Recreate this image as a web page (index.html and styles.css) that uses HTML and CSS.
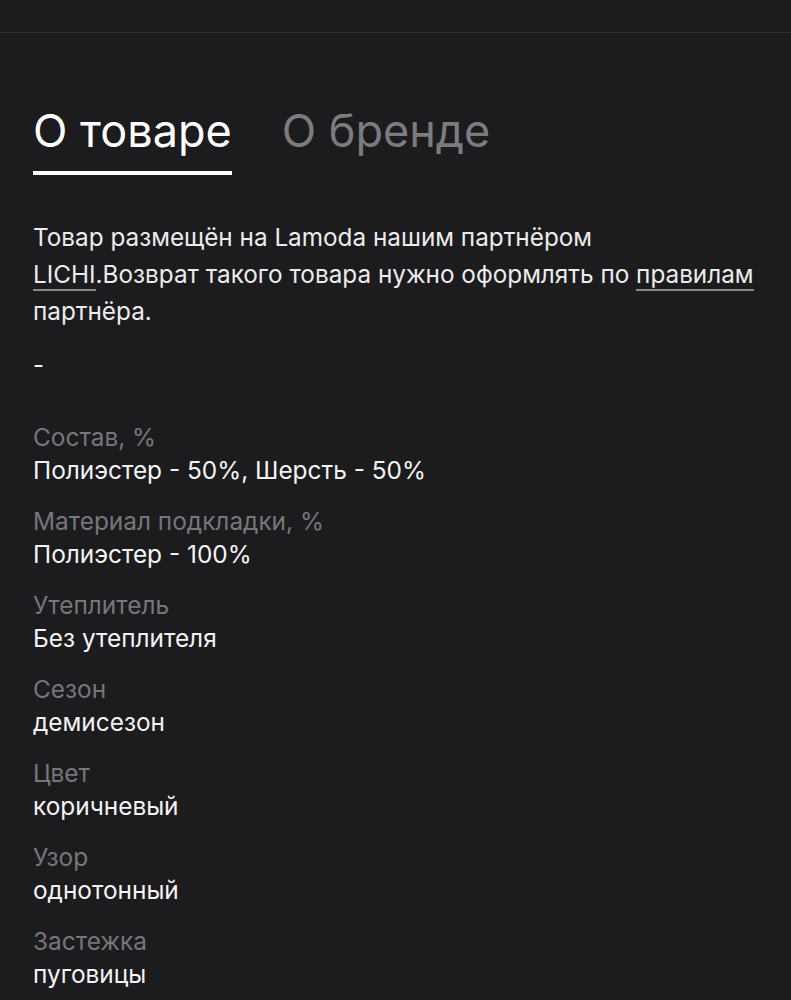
FILE: index.html
```html
<!DOCTYPE html>
<html lang="ru">
<head>
    <meta charset="UTF-8">
    <meta name="viewport" content="width=device-width, initial-scale=1.0">
    <title>О товаре</title>
    <link rel="stylesheet" href="styles.css">
</head>
<body>
    <div class="topbar"></div>

    <div class="content">
        <!-- Tabs -->
        <div class="tabs">
            <div class="tab active">О товаре</div>
            <div class="tab">О бренде</div>
        </div>

        <p class="partner">
            <span class="line">Товар размещён на Lamoda нашим партнёром</span>
            <span class="line"><a href="#" class="link">LICHI</a>.Возврат такого товара нужно оформлять по <a href="#" class="link">правилам</a></span>
            <span class="line">партнёра.</span>
        </p>

        <p class="dash">-</p>

        <div class="specs">
            <div class="spec">
                <div class="spec-label">Состав, %</div>
                <div class="spec-value">Полиэстер - 50%, Шерсть - 50%</div>
            </div>
            <div class="spec">
                <div class="spec-label">Материал подкладки, %</div>
                <div class="spec-value">Полиэстер - 100%</div>
            </div>
            <div class="spec">
                <div class="spec-label">Утеплитель</div>
                <div class="spec-value">Без утеплителя</div>
            </div>
            <div class="spec">
                <div class="spec-label">Сезон</div>
                <div class="spec-value">демисезон</div>
            </div>
            <div class="spec">
                <div class="spec-label">Цвет</div>
                <div class="spec-value">коричневый</div>
            </div>
            <div class="spec">
                <div class="spec-label">Узор</div>
                <div class="spec-value">однотонный</div>
            </div>
            <div class="spec">
                <div class="spec-label">Застежка</div>
                <div class="spec-value">пуговицы</div>
            </div>
        </div>
    </div>
</body>
</html>
```

FILE: styles.css
```css
body {
    margin: 0;
    background-color: #1c1b1e;
    color: #f2f2f2;
    font-family: Inter, 'Liberation Sans', sans-serif;
}
.topbar {
    height: 32px;
    border-bottom: 1px solid #2f2e31;
}
.content {
    padding: 0 33px;
}
.tabs {
    display: flex;
    gap: 50px;
    margin-top: 70px;
}
.tab {
    font-size: 45px;
    line-height: 56px;
    color: #7c7c7e;
    padding-bottom: 12px;
    border-bottom: 4px solid transparent;
}
.tab.active {
    color: #ffffff;
    border-bottom-color: #ffffff;
}
.partner {
    font-size: 24.3px;
    line-height: 37px;
    margin: 44px 0 0;
    color: #ececec;
}
.partner .line {
    display: block;
    white-space: nowrap;
}
.link {
    color: inherit;
    text-decoration: none;
    border-bottom: 2px solid #8a8a8c;
}
.dash {
    font-size: 24px;
    margin: 20px 0 0;
}
.specs {
    margin-top: 42px;
    display: flex;
    flex-direction: column;
    gap: 18px;
}
.spec-label {
    font-size: 24.4px;
    line-height: 33px;
    color: #77767a;
}
.spec-value {
    font-size: 24.4px;
    line-height: 33px;
    color: #f4f4f4;
}
```
